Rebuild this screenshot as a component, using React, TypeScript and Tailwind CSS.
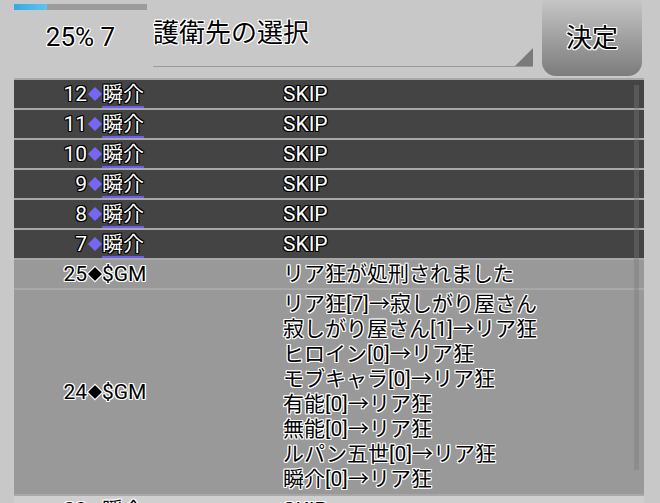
const font = "font-['Roboto','Noto_Sans_CJK_JP',sans-serif]";

const whiteOnBlack =
  "text-white [text-shadow:1px_1px_0_#000,-1px_-1px_0_#000,1px_-1px_0_#000,-1px_1px_0_#000,0_1px_0_#000,0_-1px_0_#000,1px_0_0_#000,-1px_0_0_#000]";
const blackOnWhite =
  "text-black [text-shadow:1px_1px_0_#fff,-1px_-1px_0_#fff,1px_-1px_0_#fff,-1px_1px_0_#fff,0_1px_0_#fff,0_-1px_0_#fff,1px_0_0_#fff,-1px_0_0_#fff]";

type Entry = {
  no: number;
  name: string;
  gm?: boolean;
  lines: string[];
  tone: "dark" | "light" | "pale";
};

const entries: Entry[] = [
  { no: 12, name: "瞬介", lines: ["SKIP"], tone: "dark" },
  { no: 11, name: "瞬介", lines: ["SKIP"], tone: "dark" },
  { no: 10, name: "瞬介", lines: ["SKIP"], tone: "dark" },
  { no: 9, name: "瞬介", lines: ["SKIP"], tone: "dark" },
  { no: 8, name: "瞬介", lines: ["SKIP"], tone: "dark" },
  { no: 7, name: "瞬介", lines: ["SKIP"], tone: "dark" },
  { no: 25, name: "$GM", gm: true, lines: ["リア狂が処刑されました"], tone: "light" },
  {
    no: 24,
    name: "$GM",
    gm: true,
    lines: [
      "リア狂[7]→寂しがり屋さん",
      "寂しがり屋さん[1]→リア狂",
      "ヒロイン[0]→リア狂",
      "モブキャラ[0]→リア狂",
      "有能[0]→リア狂",
      "無能[0]→リア狂",
      "ルパン五世[0]→リア狂",
      "瞬介[0]→リア狂",
    ],
    tone: "light",
  },
  { no: 23, name: "瞬介", lines: ["SKIP"], tone: "pale" },
];

const Row = ({ entry }: { entry: Entry }) => {
  const bg =
    entry.tone === "dark" ? "bg-[#444444]" : entry.tone === "light" ? "bg-[#999999]" : "bg-[#cfcfcf]";
  const text = entry.tone === "dark" ? whiteOnBlack : blackOnWhite;
  const multi = entry.lines.length > 1;

  return (
    <div className={`grid grid-cols-[269px_1fr] border-t-2 border-[#a8a8a8] ${bg} ${text}`}>
      <div className="flex items-center leading-[28px]">
        <span className="w-[73px] text-right">{entry.no}</span>
        {entry.gm ? (
          <span className="ml-[3px] mr-[2px] size-[10px] rotate-45 bg-black outline-1 outline-white" />
        ) : (
          <span className="ml-[3px] mr-[2px] size-[10px] rotate-45 bg-[#7766f2]" />
        )}
        {entry.gm ? (
          <span>{entry.name}</span>
        ) : (
          <span className="inline-block h-[28px] shadow-[inset_0_-2px_0_#6c5cf0]">{entry.name}</span>
        )}
      </div>
      <div className={multi ? "py-[2px] leading-[25px]" : "leading-[28px]"}>
        {entry.lines.map((l, i) => (
          <div key={i}>{l}</div>
        ))}
      </div>
    </div>
  );
};

export default function App() {
  return (
    <div className={`h-[503px] w-[660px] overflow-hidden bg-[#c8c8c8] ${font}`}>
      <div className="flex h-[78px]">
        <div className="w-[147px] pl-[14px]">
          <div className="mt-[4px] h-[6px] w-[133px] bg-[#9c9c9c]">
            <div className="h-full w-[33px] bg-gradient-to-r from-[#36a9e0] to-[#5cc4f0]" />
          </div>
          <div className={`mt-[12px] text-center text-[26px] leading-[30px] ${blackOnWhite}`}>25% 7</div>
        </div>

        <div className="relative ml-[6px] h-[67px] w-[380px] border-b border-[#9a9a9a]">
          <div className={`pt-[16px] text-[26px] leading-[34px] ${blackOnWhite}`}>護衛先の選択</div>
          <svg className="absolute right-0 bottom-0" width="18" height="18" viewBox="0 0 18 18">
            <polygon points="18,0 18,18 0,18" fill="#7a7a7a" />
          </svg>
        </div>

        <div
          className={`ml-[9px] flex h-[76px] w-[100px] items-center justify-center rounded-b-[14px] bg-gradient-to-b from-[#c6c6c6] to-[#7c7c7c] text-[26px] ${blackOnWhite}`}
        >
          決定
        </div>
      </div>

      <div className="relative ml-[14px] w-[630px] text-[21px]">
        {entries.map((e, i) => (
          <Row key={i} entry={e} />
        ))}
        <div className="absolute top-[7px] left-[620px] h-[385px] w-[5px] bg-[#777777]/40" />
      </div>
    </div>
  );
}
